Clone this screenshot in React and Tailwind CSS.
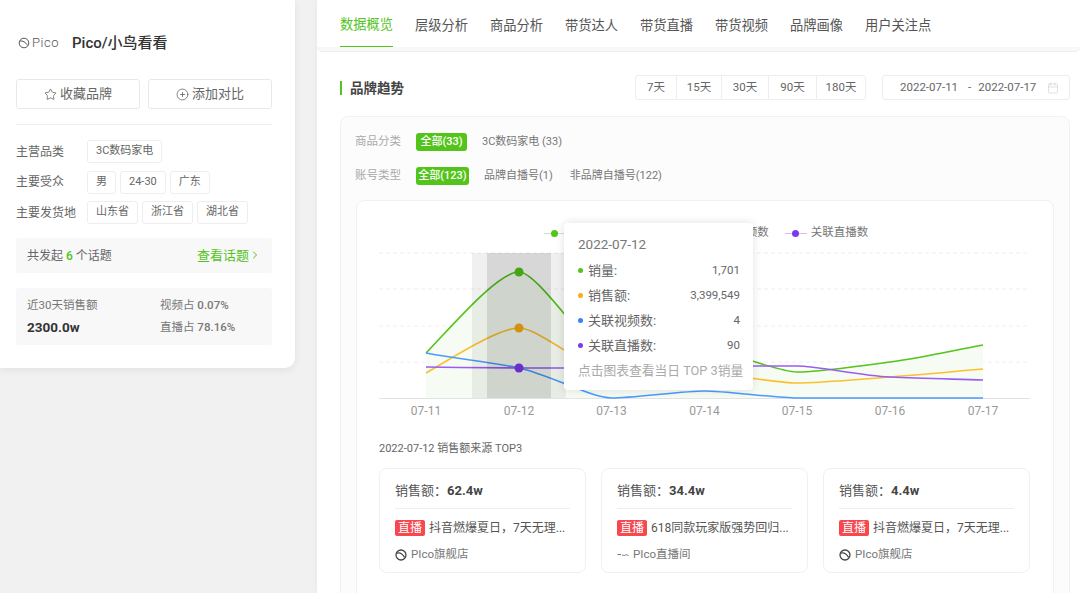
import { Star, CirclePlus, ChevronRight, Calendar } from 'lucide-react'

const TABS = ['数据概览', '层级分析', '商品分析', '带货达人', '带货直播', '带货视频', '品牌画像', '用户关注点']
const RANGES = [
  ['7天', 'w-[40px]'],
  ['15天', 'w-[45px]'],
  ['30天', 'w-[47px]'],
  ['90天', 'w-[48px]'],
  ['180天', 'w-[49px]'],
]
const DAYS = ['07-11', '07-12', '07-13', '07-14', '07-15', '07-16', '07-17']
const XS = [426, 519, 611.5, 704.5, 797, 890, 983]

const SERIES = {
  green: [353, 272, 358, 349, 372, 362, 345],
  orange: [373, 328, 370, 373, 383, 377, 369],
  blue: [353, 368, 398, 391, 398, 398, 398],
  purple: [367, 368, 368, 366, 366, 377, 380],
}

// smooth line, flat tangent on local peaks so the top of the curve sits on the point
function smooth(ys) {
  const last = ys.length - 1
  const slope = ys.map((y, i) => {
    if (i === 0) return (1.2 * (ys[1] - y)) / (XS[1] - XS[0])
    if (i === last) return (y - ys[i - 1]) / (XS[i] - XS[i - 1])
    const a = (y - ys[i - 1]) / (XS[i] - XS[i - 1])
    const b = (ys[i + 1] - y) / (XS[i + 1] - XS[i])
    return a * b <= 0 ? 0 : (2 * a * b) / (a + b)
  })
  let d = `M${XS[0]} ${ys[0]}`
  for (let i = 1; i < ys.length; i++) {
    const gap = XS[i] - XS[i - 1]
    const dx0 = gap * (slope[i - 1] === 0 ? 0.22 : 0.33)
    const dx1 = gap * (slope[i] === 0 ? 0.22 : 0.33)
    d += ` C${XS[i - 1] + dx0} ${ys[i - 1] + slope[i - 1] * dx0} ${XS[i] - dx1} ${ys[i] - slope[i] * dx1} ${XS[i]} ${ys[i]}`
  }
  return d
}

function PicoMark({ size = 12 }) {
  return (
    <svg width={size} height={size} viewBox="0 0 12 12" fill="none" stroke="#444" className="shrink-0">
      <circle cx="6" cy="6" r="5" strokeWidth="1.3" />
      <path d="M2 4.2C4.5 3.4 7.5 5 9.6 8.4" strokeWidth="1.2" />
    </svg>
  )
}

function Tag({ children }) {
  return (
    <span className="h-[23px] px-2 flex items-center rounded-[3px] border border-[#eeeeee] text-[11px] text-[#666]">
      {children}
    </span>
  )
}

function InfoRow({ label, tags }) {
  return (
    <div className="flex items-center h-[23px]">
      <span className="w-[71px] text-xs text-[#666]">{label}</span>
      <div className="flex gap-1">
        {tags.map(t => <Tag key={t}>{t}</Tag>)}
      </div>
    </div>
  )
}

function Sidebar() {
  return (
    <aside className="w-[295px] h-[368px] shrink-0 bg-white rounded-br-[10px] shadow-[0_2px_8px_rgba(0,0,0,0.07)] pl-4 pr-[23px] pt-[33px]">
      <div className="flex items-center h-[20px]">
        <div className="w-[56px] flex items-center gap-[2px]">
          <svg width="12" height="12" viewBox="0 0 12 12" fill="none" stroke="#555" className="ml-[2px] shrink-0">
            <circle cx="6" cy="6" r="4.8" strokeWidth="1" />
            <path d="M2 4.2C4.5 3.4 7.5 5 9.6 8.4" strokeWidth="1" />
          </svg>
          <span className="text-[13px] font-light tracking-[0.5px] text-[#555]">Pico</span>
        </div>
        <span className="text-[15px] font-medium text-[#333]">Pico/小鸟看看</span>
      </div>
      <div className="flex gap-2 mt-[26px]">
        <button className="flex-1 h-[30px] flex items-center justify-center gap-[3px] rounded-[3px] border border-[#e8e8e8] text-[13px] text-[#666]">
          <Star size={13} strokeWidth={1.5} /> 收藏品牌
        </button>
        <button className="flex-1 h-[30px] flex items-center justify-center gap-[3px] rounded-[3px] border border-[#e8e8e8] text-[13px] text-[#666]">
          <CirclePlus size={13} strokeWidth={1.5} /> 添加对比
        </button>
      </div>
      <div className="h-px bg-[#eeeeee] mt-[15px]" />
      <div className="flex flex-col gap-[7.5px] mt-[15px]">
        <InfoRow label="主营品类" tags={['3C数码家电']} />
        <InfoRow label="主要受众" tags={['男', '24-30', '广东']} />
        <InfoRow label="主要发货地" tags={['山东省', '浙江省', '湖北省']} />
      </div>
      <div className="h-[35px] mt-[14px] px-[11px] rounded-[3px] bg-[#f8f8f8] flex items-center justify-between text-xs text-[#666]">
        <span>共发起 <b className="font-medium text-[#52c41a]">6</b> 个话题</span>
        <span className="flex items-center text-[13px] text-[#52c41a]">查看话题 <ChevronRight size={12} /></span>
      </div>
      <div className="h-[57px] mt-[15px] px-[11px] rounded-[3px] bg-[#f8f8f8] grid grid-cols-[133px_1fr] content-center gap-y-[5px] text-[11.5px] text-[#777]">
        <span className="leading-[17px]">近30天销售额</span>
        <span className="leading-[17px]">视频占 <b className="font-medium">0.07%</b></span>
        <span className="leading-[17px] text-[13.5px] font-bold text-[#333]">2300.0w</span>
        <span className="leading-[17px]">直播占 <b className="font-medium">78.16%</b></span>
      </div>
    </aside>
  )
}

function Filters({ label, pillWidth, items }) {
  return (
    <div className="flex items-center h-[18px]">
      <span className="w-[61px] text-[11.5px] text-[#aaa]">{label}</span>
      {items.map((t, i) => (
        <span
          key={t}
          className={i === 0
            ? `${pillWidth} h-[18px] mr-[15px] flex items-center justify-center rounded-[3px] bg-[#52c41a] text-white text-[11px] font-medium`
            : 'mr-[17px] text-[11px] text-[#777]'}
        >
          {t}
        </span>
      ))}
    </div>
  )
}

function LegendItem({ color, label }) {
  return (
    <div className="flex items-center gap-1">
      <span className="relative w-[22px] h-px" style={{ background: color + '55' }}>
        <span className="absolute left-[7px] top-[-3px] w-[7px] h-[7px] rounded-full" style={{ background: color }} />
      </span>
      <span className="text-[11.5px] text-[#777]">{label}</span>
    </div>
  )
}

function Chart() {
  const gridYs = [253, 289, 326, 362]
  return (
    <svg width="651" height="175" viewBox="379 245 651 175" className="block mt-[2px]">
      {gridYs.map(y => (
        <line key={y} x1="379" x2="1030" y1={y} y2={y} stroke="#eeeeee" strokeDasharray="4 3" />
      ))}
      <path d={`${smooth(SERIES.green)} V398 H426 Z`} fill="#f6fbf3" />
      <line x1="379" x2="1030" y1="398.5" y2="398.5" stroke="#e3e3e3" />
      <path d={smooth(SERIES.green)} fill="none" stroke="#52c41a" strokeWidth="1.6" />
      <path d={smooth(SERIES.orange)} fill="none" stroke="#fbc02d" strokeWidth="1.6" />
      <path d={smooth(SERIES.blue)} fill="none" stroke="#4a9bff" strokeWidth="1.6" />
      <path d={smooth(SERIES.purple)} fill="none" stroke="#9b5cf6" strokeWidth="1.6" />
      <circle cx="519" cy="272" r="4.5" fill="#52c41a" />
      <circle cx="519" cy="328" r="4.5" fill="#faad14" />
      <circle cx="519" cy="368" r="4.5" fill="#7c3aed" />
      <rect x="472" y="253" width="94" height="145" fill="#000" fillOpacity="0.06" />
      <rect x="487" y="253" width="64" height="145" fill="#000" fillOpacity="0.1" />
      {DAYS.map((d, i) => (
        <text key={d} x={XS[i]} y="415" textAnchor="middle" fontSize="12" fill="#999">{d}</text>
      ))}
    </svg>
  )
}

function Tooltip() {
  const rows = [
    ['#52c41a', '销量:', '1,701'],
    ['#faad14', '销售额:', '3,399,549'],
    ['#3b82f6', '关联视频数:', '4'],
    ['#7c3aed', '关联直播数:', '90'],
  ]
  return (
    <div className="absolute left-[207px] top-[22px] w-[189px] h-[167px] pl-[14px] pr-[13px] pt-[12px] bg-white rounded-[4px] shadow-[0_0_10px_rgba(0,0,0,0.12)]">
      <div className="h-[18px] leading-[18px] text-[13.5px] text-[#777]">2022-07-12</div>
      <div className="flex flex-col mt-[5px]">
        {rows.map(([color, label, value]) => (
          <div key={label} className="h-[25px] flex items-center text-[#666]">
            <span className="w-[5px] h-[5px] rounded-full mr-[5px]" style={{ background: color }} />
            <span className="text-[13px]">{label}</span>
            <span className="ml-auto text-[11.5px]">{value}</span>
          </div>
        ))}
      </div>
      <div className="mt-[4px] text-[12.75px] leading-[18px] text-[#aaa] whitespace-nowrap">点击图表查看当日 TOP 3销量</div>
    </div>
  )
}

function TopCard({ amount, title, shop, live }) {
  return (
    <div className="w-[207px] h-[105px] px-[15px] rounded-[8px] border border-[#f0f0f0] bg-white">
      <div className="h-[39px] pt-[5px] flex items-center text-[13px] text-[#555]">
        销售额：<b className="font-bold text-[#444]">{amount}</b>
      </div>
      <div className="h-px bg-[#eeeeee]" />
      <div className="flex items-center gap-1 mt-[11px] h-[16px]">
        <span className="w-[30px] h-[16px] shrink-0 flex items-center justify-center rounded-[2px] bg-[#f5484f] text-white text-xs">直播</span>
        <span className="text-xs text-[#555] whitespace-nowrap">{title}</span>
      </div>
      <div className="flex items-center gap-[4px] mt-[10px] text-[11.5px] text-[#777]">
        {live ? (
          <svg width="12" height="12" viewBox="0 0 12 12" fill="none" stroke="#777" className="shrink-0">
            <path d="M0.5 5.5H4M5 6.5C6 5.5 7 7 8 6.2S10 6 11.5 6.5" strokeWidth="1" />
          </svg>
        ) : <PicoMark />}
        {shop}
      </div>
    </div>
  )
}

export default function App() {
  return (
    <div className="w-[1080px] h-[593px] overflow-hidden flex items-start gap-[22px] bg-[#f1f1f1] font-['Roboto','Noto_Sans_CJK_SC',sans-serif]">
      <Sidebar />
      <main className="flex-1 h-full bg-white shadow-[0_0_6px_rgba(0,0,0,0.05)]">
        <nav className="h-[47px] pl-[23px] flex gap-[22px] bg-white">
          {TABS.map((t, i) => (
            <span
              key={t}
              className={i === 0
                ? 'h-[47px] pt-1 flex items-center text-[13.25px] text-[#52c41a] border-b border-[#52c41a]'
                : 'h-[47px] pt-1 flex items-center text-[13.25px] text-[#555]'}
            >
              {t}
            </span>
          ))}
        </nav>
        <div className="h-[5px] bg-[#f8f8f8] border-b border-[#eeeeee] rounded-b-[6px]" />

        <div className="pl-[23px] pr-[10px]">
          <div className="flex items-center h-[25px] mt-[23px]">
            <span className="w-[2px] h-[14px] bg-[#52c41a]" />
            <span className="ml-2 pt-px text-[13.5px] font-bold text-[#444]">品牌趋势</span>
            <div className="ml-auto flex h-[25px] rounded-[3px] border border-[#eeeeee]">
              {RANGES.map(([r, w], i) => (
                <span
                  key={r}
                  className={`${w} flex items-center justify-center text-[11.5px] text-[#666] ${i === 0 ? '' : 'border-l border-[#eeeeee]'}`}
                >
                  {r}
                </span>
              ))}
            </div>
            <div className="ml-[16px] w-[188px] h-[25px] pl-[17px] pr-[10px] flex items-center rounded-[3px] border border-[#eeeeee] text-[11.5px] text-[#666]">
              <span>2022-07-11</span>
              <span className="ml-[10px]">-</span>
              <span className="ml-[7px]">2022-07-17</span>
              <Calendar size={12} strokeWidth={1.2} className="ml-auto text-[#ccc]" />
            </div>
          </div>

          <section className="mt-[16px] h-[600px] rounded-[8px] border border-[#f1f1f1] bg-[#fcfcfc] px-[14px] pt-[16px]">
            <div className="flex flex-col gap-4">
              <Filters label="商品分类" pillWidth="w-[51px]" items={['全部(33)', '3C数码家电 (33)']} />
              <Filters label="账号类型" pillWidth="w-[53px]" items={['全部(123)', '品牌自播号(1)', '非品牌自播号(122)']} />
            </div>
            <div className="relative mt-[15px] ml-px mr-px h-[500px] rounded-[8px] border border-[#f1f1f1] bg-white pl-[22px] pr-[23px] pt-[22px]">
              <div className="flex justify-center gap-4 h-[20px] items-center pl-[3px]">
                <LegendItem color="#52c41a" label="销量" />
                <LegendItem color="#faad14" label="销售额" />
                <LegendItem color="#3b82f6" label="关联视频数" />
                <LegendItem color="#7c3aed" label="关联直播数" />
              </div>
              <Chart />
              <Tooltip />
              <div className="mt-[22px] h-[14px] leading-[14px] text-[11px] text-[#666]">2022-07-12 销售额来源 TOP3</div>
              <div className="flex justify-between mt-[12px]">
                <TopCard amount="62.4w" title="抖音燃爆夏日，7天无理..." shop="PIco旗舰店" />
                <TopCard amount="34.4w" title="618同款玩家版强势回归..." shop="PIco直播间" live />
                <TopCard amount="4.4w" title="抖音燃爆夏日，7天无理..." shop="PIco旗舰店" />
              </div>
            </div>
          </section>
        </div>
      </main>
    </div>
  )
}
